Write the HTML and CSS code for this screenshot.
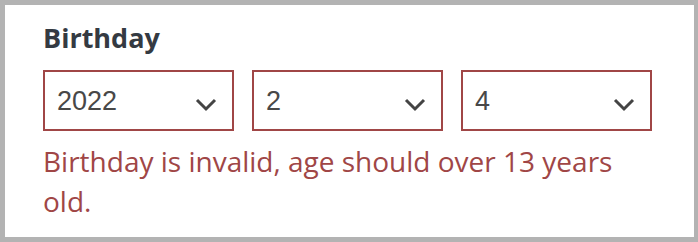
FILE: index.html
```html
<!DOCTYPE html>
<html>
<head>
<meta charset="utf-8">
<link rel="stylesheet" href="styles.css">
</head>
<body>
<div class="frame">
  <div class="card">
    <label class="label">Birthday</label>
    <div class="selects">
      <div class="select-wrap">
        <select class="select"><option>2022</option></select>
        <svg class="chev" width="22" height="14" viewBox="0 0 22 14"><path d="M2 2 L11 11 L20 2" fill="none" stroke="#444" stroke-width="3"/></svg>
      </div>
      <div class="select-wrap">
        <select class="select"><option>2</option></select>
        <svg class="chev" width="22" height="14" viewBox="0 0 22 14"><path d="M2 2 L11 11 L20 2" fill="none" stroke="#444" stroke-width="3"/></svg>
      </div>
      <div class="select-wrap">
        <select class="select"><option>4</option></select>
        <svg class="chev" width="22" height="14" viewBox="0 0 22 14"><path d="M2 2 L11 11 L20 2" fill="none" stroke="#444" stroke-width="3"/></svg>
      </div>
    </div>
    <p class="error">Birthday is invalid, age should over 13 years old.</p>
  </div>
</div>
</body>
</html>
```
FILE: styles.css
```css
html, body {
  margin: 0;
  padding: 0;
  background: #b3b3b3;
}
.frame {
  width: 698px;
  height: 242px;
  box-sizing: border-box;
  padding: 5px 4px 5px 5px;
}
.card {
  background: #fff;
  height: 100%;
  box-sizing: border-box;
  padding: 17px 42px 0 38px;
}
.label {
  display: block;
  font-family: "Open Sans", sans-serif;
  font-weight: 700;
  font-size: 27px;
  line-height: 32px;
  color: #343a42;
  margin-bottom: 16px;
}
.selects {
  display: flex;
  gap: 18px;
}
.select-wrap {
  position: relative;
  width: 191px;
}
.select {
  appearance: none;
  -webkit-appearance: none;
  width: 100%;
  height: 61px;
  box-sizing: border-box;
  border: 2px solid #a04646;
  border-radius: 0;
  background: #fff;
  padding: 0 0 0 12px;
  font-family: "Liberation Sans", Arial, sans-serif;
  font-size: 27px;
  color: #484848;
  outline: none;
}
.chev {
  position: absolute;
  right: 17px;
  top: 28px;
  pointer-events: none;
}
.error {
  margin: 10px 0 0;
  font-family: "Open Sans", sans-serif;
  font-size: 28px;
  line-height: 40px;
  color: #a04646;
}
```
